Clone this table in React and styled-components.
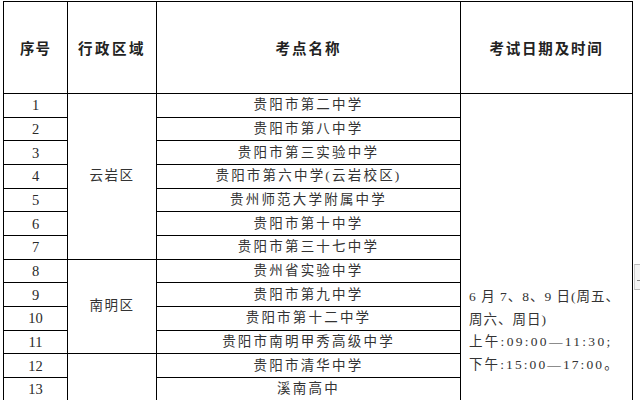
import React from "react";
import styled, { createGlobalStyle } from "styled-components";

const Global = createGlobalStyle`
  html, body { margin: 0; padding: 0; background: #fff; }
  body { width: 640px; height: 400px; overflow: hidden; }
`;

const Page = styled.div`
  position: relative;
  width: 640px;
  height: 400px;
  overflow: hidden;
  padding: 1px 0 0 3px;
  box-sizing: border-box;
`;

const Table = styled.table`
  border-collapse: collapse;
  table-layout: fixed;
  width: 629px;
  font-family: "Liberation Serif", "Noto Sans CJK SC", serif;
  color: #2a2a2a;
`;

const HeadCell = styled.th`
  height: 91px;
  border: 1px solid #000;
  padding: 0;
  font-family: "Liberation Serif", "Noto Sans CJK SC", serif;
  font-weight: 700;
  font-size: 14.5px;
  letter-spacing: ${(p) => p.$ls || 1.5}px;
  text-align: center;
  vertical-align: middle;
  color: #222;
`;

const Row = styled.tr`
  height: 23.67px;
`;

const NumCell = styled.td`
  border: 1px solid #000;
  padding: 0;
  text-align: center;
  vertical-align: middle;
  font-size: 14.5px;
  line-height: 20px;
`;

const TextCell = styled.td`
  border: 1px solid #000;
  padding: 0;
  text-align: center;
  vertical-align: middle;
  font-size: 13.5px;
  letter-spacing: ${(p) => p.$ls ?? 2.2}px;
  line-height: 20px;
  white-space: nowrap;
  color: #333;
`;

const DateCell = styled.td`
  border: 1px solid #000;
  padding: 192px 0 0 8px;
  vertical-align: top;
  text-align: left;
  font-size: 13.5px;
  line-height: 22.5px;
  white-space: nowrap;
  color: #333;
`;

const DateLine = styled.div`
  letter-spacing: ${(p) => p.$ls}px;
`;

const Edge = styled.div`
  position: absolute;
  left: 634px;
  top: 264px;
  width: 8px;
  height: 24px;
  background: #f4f4f4;
  border-top: 1px solid #bbb;
  border-bottom: 1px solid #bbb;
  border-left: 1px solid #ccc;
  &::after {
    content: "";
    position: absolute;
    left: 2px;
    top: 15px;
    width: 4px;
    height: 1px;
    background: #888;
  }
`;

const sites = [
  "贵阳市第二中学",
  "贵阳市第八中学",
  "贵阳市第三实验中学",
  "贵阳市第六中学(云岩校区)",
  "贵州师范大学附属中学",
  "贵阳市第十中学",
  "贵阳市第三十七中学",
  "贵州省实验中学",
  "贵阳市第九中学",
  "贵阳市第十二中学",
  "贵阳市南明甲秀高级中学",
  "贵阳市清华中学",
  "溪南高中",
  "",
];

const regions = { 0: ["云岩区", 7], 7: ["南明区", 4], 11: ["", 3] };

const dateLines = [
  ["6 月 7、8、9 日(周五、", 1],
  ["周六、周日)", 1],
  ["上午:09:00—11:30;", 2.3],
  ["下午:15:00—17:00。", 2.1],
];

export default function App() {
  return (
    <>
      <Global />
      <Page>
        <Table>
          <colgroup>
            <col style={{ width: 64 }} />
            <col style={{ width: 89 }} />
            <col style={{ width: 304 }} />
            <col style={{ width: 172 }} />
          </colgroup>
          <thead>
            <tr>
              <HeadCell $ls={1}>序号</HeadCell>
              <HeadCell $ls={2.5}>行政区域</HeadCell>
              <HeadCell $ls={2}>考点名称</HeadCell>
              <HeadCell $ls={1.8}>考试日期及时间</HeadCell>
            </tr>
          </thead>
          <tbody>
            {sites.map((s, i) => (
              <Row key={i}>
                <NumCell>{i < 13 ? i + 1 : ""}</NumCell>
                {regions[i] && (
                  <TextCell rowSpan={regions[i][1]} $ls={1.5}>
                    {regions[i][0]}
                  </TextCell>
                )}
                <TextCell>{s}</TextCell>
                {i === 0 && (
                  <DateCell rowSpan={sites.length}>
                    {dateLines.map(([t, ls]) => (
                      <DateLine key={t} $ls={ls}>
                        {t}
                      </DateLine>
                    ))}
                  </DateCell>
                )}
              </Row>
            ))}
          </tbody>
        </Table>
        <Edge />
      </Page>
    </>
  );
}
